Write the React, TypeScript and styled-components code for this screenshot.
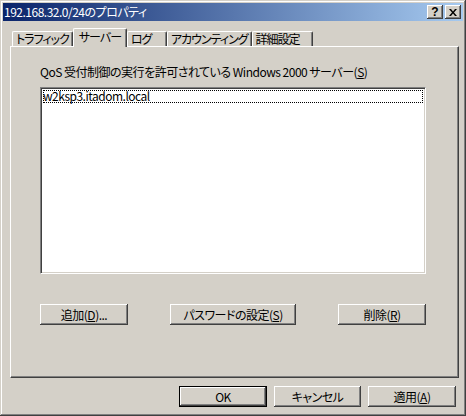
import React from "react";
import styled, { createGlobalStyle, css } from "styled-components";

const GlobalStyle = createGlobalStyle`
  html, body { margin: 0; padding: 0; background: #d4d0c8; }
  body {
    font-family: "Noto Sans CJK JP", "Noto Sans", sans-serif;
    font-size: 12px;
    font-feature-settings: "palt";
    letter-spacing: -0.5px;
    color: #000;
  }
  * { box-sizing: border-box; }
`;

const Window = styled.div`
  width: 466px;
  height: 416px;
  background: #d4d0c8;
  padding: 3px;
  display: flex;
  flex-direction: column;
  box-shadow: inset -1px -1px #404040, inset 1px 1px #d4d0c8,
    inset -2px -2px #808080, inset 2px 2px #ffffff;
`;

const TitleBar = styled.div`
  height: 18px;
  flex: none;
  display: flex;
  align-items: center;
  justify-content: space-between;
  background: linear-gradient(to right, #0a246a, #a6caf0);
  color: #fff;
  padding: 0 2px 0 1px;
  line-height: 18px;
  white-space: nowrap;
`;

const Caption = styled.span`
  font-size: 12px;
`;

const CaptionButtons = styled.div`
  display: flex;
  gap: 2px;
`;

const CaptionButton = styled.div`
  width: 16px;
  height: 14px;
  background: #d4d0c8;
  color: #000;
  display: flex;
  align-items: center;
  justify-content: center;
  box-shadow: inset -1px -1px #404040, inset 1px 1px #ffffff,
    inset -2px -2px #808080;
  line-height: 14px;
`;

const Body = styled.div`
  flex: 1;
  display: flex;
  flex-direction: column;
  padding: 7px 4px 0 7px;
`;

const TabRow = styled.div`
  display: flex;
  align-items: flex-end;
  height: 18px;
  padding-left: 2px;
  position: relative;
  z-index: 1;
`;

const Tab = styled.div<{ $w: number; $active?: boolean }>`
  min-width: ${(p) => p.$w}px;
  height: 15px;
  background: #d4d0c8;
  border-top: 1px solid #fff;
  border-left: 1px solid #fff;
  border-right: 1px solid #404040;
  border-top-left-radius: 2px;
  border-top-right-radius: 2px;
  box-shadow: inset -1px 0 #808080;
  padding: 0 3px 0 3px;
  line-height: 14px;
  letter-spacing: -1px;
  white-space: nowrap;
  ${(p) =>
    p.$active &&
    css`
      height: 19px;
      margin-bottom: -1px;
      padding-left: 5px;
      line-height: 16px;
    `}
`;

const Panel = styled.div`
  height: 332px;
  flex: none;
  border-top: 1px solid #fff;
  border-left: 1px solid #fff;
  border-right: 1px solid #404040;
  border-bottom: 1px solid #404040;
  box-shadow: inset -1px -1px #808080;
  padding: 17px 30px 0 29px;
  display: flex;
  flex-direction: column;
`;

const Label = styled.div`
  height: 15px;
  line-height: 15px;
  white-space: nowrap;
`;

const ListBox = styled.div`
  margin-top: 8px;
  width: 386px;
  height: 187px;
  background: #fff;
  border-top: 1px solid #808080;
  border-left: 1px solid #808080;
  border-right: 1px solid #fff;
  border-bottom: 1px solid #fff;
  box-shadow: inset 1px 1px #404040, inset -1px -1px #d4d0c8;
  padding: 2px;
`;

const ListItem = styled.div<{ $focused?: boolean }>`
  height: 13px;
  line-height: 12px;
  white-space: nowrap;
  ${(p) => p.$focused && css`outline: 1px dotted #000; outline-offset: -1px;`}
`;

const ButtonRow = styled.div`
  margin-top: 30px;
  width: 386px;
  display: flex;
  justify-content: space-between;
`;

const Button = styled.div<{ $w: number; $default?: boolean }>`
  width: ${(p) => p.$w}px;
  height: 21px;
  background: #d4d0c8;
  display: flex;
  align-items: center;
  justify-content: center;
  white-space: nowrap;
  line-height: 14px;
  box-shadow: inset -1px -1px #404040, inset 1px 1px #ffffff,
    inset -2px -2px #808080;
  ${(p) =>
    p.$default &&
    css`
      border: 1px solid #000;
    `}
`;

const Footer = styled.div`
  margin-top: 8px;
  padding-right: 3px;
  display: flex;
  justify-content: flex-end;
  gap: 7px;
`;

const Glyph = styled.span`
  font-family: "Liberation Sans", sans-serif;
  font-weight: bold;
  font-size: 12px;
  letter-spacing: 0;
`;

export default function App() {
  return (
    <>
      <GlobalStyle />
      <Window>
        <TitleBar>
          <Caption>192.168.32.0/24のプロパティ</Caption>
          <CaptionButtons>
            <CaptionButton>
              <Glyph>?</Glyph>
            </CaptionButton>
            <CaptionButton>
              <svg width="8" height="7" viewBox="0 0 8 7">
                <path d="M0 0h2l2 2.5L6 0h2L5 3.5 8 7H6L4 4.5 2 7H0l3-3.5z" fill="#000" />
              </svg>
            </CaptionButton>
          </CaptionButtons>
        </TitleBar>
        <Body>
          <TabRow>
            <Tab $w={57}>トラフィック</Tab>
            <Tab $w={54} $active>サーバー</Tab>
            <Tab $w={40}>ログ</Tab>
            <Tab $w={82}>アカウンティング</Tab>
            <Tab $w={61}>詳細設定</Tab>
          </TabRow>
          <Panel>
            <Label>
              QoS 受付制御の実行を許可されている Windows 2000 サーバー(<u>S</u>)
            </Label>
            <ListBox>
              <ListItem $focused>w2ksp3.itadom.local</ListItem>
            </ListBox>
            <ButtonRow>
              <Button $w={88}>
                追加(<u>D</u>)...
              </Button>
              <Button $w={126}>
                パスワードの設定(<u>S</u>)
              </Button>
              <Button $w={88}>
                削除(<u>R</u>)
              </Button>
            </ButtonRow>
          </Panel>
          <Footer>
            <Button $w={88} $default>
              OK
            </Button>
            <Button $w={87}>キャンセル</Button>
            <Button $w={88}>
              適用(<u>A</u>)
            </Button>
          </Footer>
        </Body>
      </Window>
    </>
  );
}
